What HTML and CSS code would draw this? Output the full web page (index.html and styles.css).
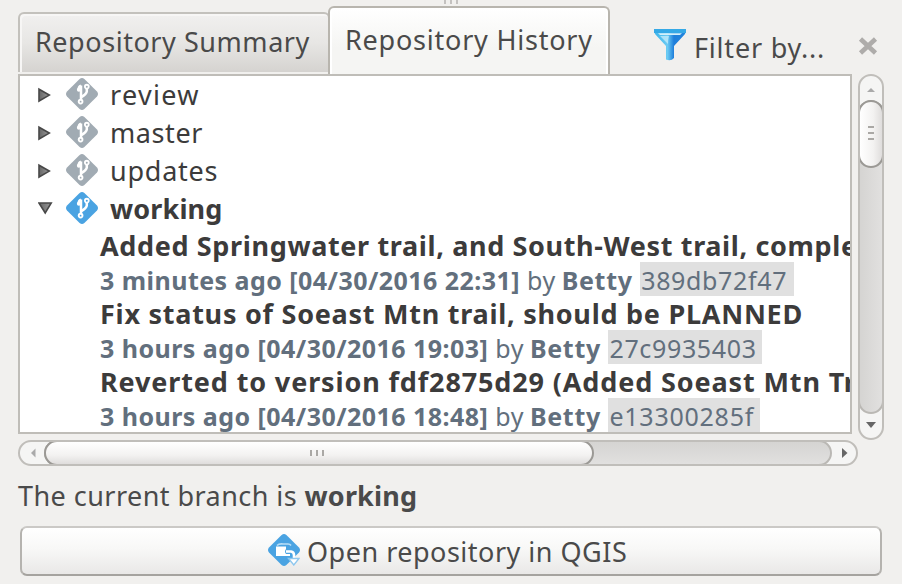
FILE: index.html
```
<!DOCTYPE html>
<html lang="en">
<head>
<meta charset="utf-8">
<title>Repository History</title>
<link rel="stylesheet" href="styles.css">
</head>
<body>
<svg class="defs" aria-hidden="true">
  <defs>
    <symbol id="branch" viewBox="0 0 32 32">
      <path fill="currentColor" d="M13.6 1Q16-1 18.4 1L31 13.6Q33 16 31 18.4L18.4 31Q16 33 13.6 31L1 18.4Q-1 16 1 13.6Z"/>
      <path d="M15 7.5V24M20.8 9V13.5Q20.5 16 15 19.5M15 7.8Q12.4 8.6 12.6 12.5" fill="none" stroke="#fff" stroke-width="2.5"/>
      <circle cx="12.9" cy="11.8" r="2" fill="#fff"/><circle cx="20.8" cy="8.6" r="2.8" fill="#fff"/><circle cx="14.6" cy="23.6" r="2.8" fill="#fff"/>
      <circle cx="20.8" cy="8.8" r="1" fill="currentColor"/><circle cx="14.6" cy="23.7" r=".9" fill="currentColor"/>
    </symbol>
    <linearGradient id="arrow"><stop offset="0" stop-color="#666"/><stop offset="1" stop-color="#999"/></linearGradient>
    <symbol id="closed" viewBox="0 0 14 16"><path d="M1 2.2V14L11.3 8.1Z" fill="url(#arrow)" stroke="#484848" stroke-width="1.6"/></symbol>
    <symbol id="open" viewBox="0 0 16 14"><path d="M1 2H13.2L7.2 12Z" fill="url(#arrow)" stroke="#484848" stroke-width="1.6"/></symbol>
    <linearGradient id="funnel"><stop offset=".1" stop-color="#45b9ec"/><stop offset=".42" stop-color="#6ccbf3"/><stop offset=".62" stop-color="#1f7fdb"/><stop offset="1" stop-color="#2485dc"/></linearGradient>
  </defs>
</svg>
<div class="panel">
  <div class="grip"><i></i><i></i><i></i></div>
  <div class="tabs">
    <div class="tab"><span class="t-sum">Repository Summary</span></div>
    <div class="tab active"><span class="t-his">Repository History</span></div>
    <div class="filter">
      <svg width="32" height="32" viewBox="0 0 32 32"><path d="M0 1.5H32L31 5 20 17V29Q17 32.5 12 30.5V17L1 5Z" fill="url(#funnel)"/><path d="M0 0H32V4H0Z" fill="#35a9e6"/><path d="M4 4.2H28L26 6H6Z" fill="#d3f0fb"/><path d="M6 7 14 15Q14 10 15 7Z" fill="#c8eefb" opacity=".75"/></svg>
      <span class="t-fil">Filter by...</span>
    </div>
    <svg class="close" width="20" height="20" viewBox="0 0 20 20"><path d="M2.5 3 17.5 17M17.5 3 2.5 17" stroke="#aeacaa" stroke-width="4.6"/></svg>
  </div>
  <div class="view">
    <div class="left">
      <div class="list">
        <div class="branch"><svg class="exp"><use href="#closed"/></svg><svg class="ico"><use href="#branch"/></svg><span class="t-rev">review</span></div>
        <div class="branch"><svg class="exp"><use href="#closed"/></svg><svg class="ico"><use href="#branch"/></svg><span class="t-mas">master</span></div>
        <div class="branch"><svg class="exp"><use href="#closed"/></svg><svg class="ico"><use href="#branch"/></svg><span class="t-upd">updates</span></div>
        <div class="branch current"><svg class="exp down"><use href="#open"/></svg><svg class="ico"><use href="#branch"/></svg><b class="t-wor">working</b></div>
        <div class="title t-c1">Added Springwater trail, and South-West trail, comple</div>
        <div class="meta"><b class="when t-w1">3 minutes ago [04/30/2016 22:31]</b><span class="by">by</span><b class="who">Betty</b><span class="hash">389db72f47</span></div>
        <div class="title t-c2">Fix status of Soeast Mtn trail, should be PLANNED</div>
        <div class="meta"><b class="when">3 hours ago [04/30/2016 19:03]</b><span class="by">by</span><b class="who">Betty</b><span class="hash">27c9935403</span></div>
        <div class="title t-c3">Reverted to version fdf2875d29 (Added Soeast Mtn Tr</div>
        <div class="meta"><b class="when">3 hours ago [04/30/2016 18:48]</b><span class="by">by</span><b class="who">Betty</b><span class="hash t-h3">e13300285f</span></div>
      </div>
      <div class="hbar">
        <svg width="840" height="26" viewBox="0 0 840 26"><path d="M17.5 8.5V17.5L13 13Z" fill="#aaa"/><path d="M824 8V18L829.5 13Z" fill="#666"/></svg>
        <div class="htrack"><div class="hthumb"><i></i><i></i><i></i></div></div>
      </div>
    </div>
    <div class="vbar">
      <svg width="26" height="366" viewBox="0 0 26 366"><path d="M9 18H17L13 14Z" fill="#aaa"/><path d="M8 348H18L13 354Z" fill="#666"/></svg>
      <div class="vtrack"><div class="vthumb"><i></i><i></i><i></i></div></div>
    </div>
  </div>
  <div class="status"><span class="t-cur">The current branch is</span><b class="t-wor">working</b></div>
  <div class="button">
    <svg width="32" height="32" viewBox="0 0 32 32"><path fill="#4aa3e2" d="M13.6 1Q16-1 18.4 1L31 13.6Q33 16 31 18.4L18.4 31Q16 33 13.6 31L1 18.4Q-1 16 1 13.6Z"/><path d="M9 11.5Q11 9.5 15 10H20Q22 10 23 11.5" fill="none" stroke="#b9def6" stroke-width="1.6"/><path d="M8 12.5H18V15Q16 17.5 18 20H22V22H8Z" fill="#fff"/><path d="M18 17.5H23Q26 18 26 21V26" fill="none" stroke="#fff" stroke-width="2.6"/><path d="M20.5 24.5H31L25.8 31Z" fill="#fff" stroke="#8ec7ee" stroke-width="1.4"/></svg>
    <span class="t-open">Open repository in QGIS</span>
  </div>
</div>
</body>
</html>
```
FILE: styles.css
```
* { box-sizing: border-box; }
body {
  margin: 0;
  background: #f1f0ee;
  color: #4a4a4a;
  font: 27px "Noto Sans", sans-serif;
  white-space: nowrap;
}
.defs { position: absolute; width: 0; height: 0; }
.panel { display: flex; flex-direction: column; width: 902px; height: 584px; padding: 0 18px; overflow: hidden; }
.grip { display: flex; gap: 4px; height: 6px; padding-left: 426px; }
.grip i { width: 2px; height: 4px; background: #c4c2c0; }
.tabs { display: flex; align-items: flex-end; height: 68px; flex: none; }
.tab {
  width: 312px; height: 60px; margin-bottom: 2px; padding-left: 15px; line-height: 56px;
  border: 2px solid #c3c1bc; border-bottom-width: 0; border-radius: 6px 6px 0 0;
  background: linear-gradient(#f1f0ef, #e7e6e4 50%, #d5d3d0);
  box-shadow: inset 2px 2px #f7f6f5;
}
.tab.active {
  width: 282px; height: 68px; margin: 0 0 0 -2px; padding-left: 15px; line-height: 64px;
  border-color: #b8b5ae; background: linear-gradient(#fff, #f5f5f3 60%);
  box-shadow: inset 2px 0 #fff, inset -2px 0 #fff;
}
.filter { display: flex; align-items: center; gap: 8px; height: 56px; margin-left: 44px; }
.filter svg { margin-top: -3px; }
.filter span { width: 164px; margin-top: 2px; }
.close { margin: 0 0 18px 0; flex: none; }
.view { display: flex; height: 392px; flex: none; }
.left { width: 840px; }
.list { width: 834px; height: 360px; border: 2px solid #bfbdb8; background: #fff; overflow: hidden; color: #3c3b3b; }
.branch { display: flex; align-items: center; height: 38px; padding-left: 18px; line-height: 38px; }
.exp { width: 14px; height: 16px; margin-right: 14px; margin-top: -1px; }
.exp.down { width: 16px; height: 14px; margin-right: 12px; margin-top: -2px; }
.ico { width: 32px; height: 32px; margin-right: 12px; margin-top: -2px; color: #a1abb3; }
.current .ico { color: #4aa3e2; }
.title { height: 34px; padding-left: 80px; line-height: 35px; font-weight: bold; }
.meta { display: flex; height: 34px; padding-left: 80px; line-height: 36px; font-size: 25px; color: #626f7d; }
.when { letter-spacing: .46px; }
.by { margin-left: 7px; letter-spacing: .5px; }
.who { margin-left: 6px; letter-spacing: .7px; }
.hash { width: 154px; margin-left: 7.5px; padding-left: 1px; background: #e0e0e0; letter-spacing: .65px; }
.t-h3 { width: 152px; letter-spacing: .75px; }
.t-sum { letter-spacing: .55px; }
.t-his { letter-spacing: .78px; }
.t-fil { letter-spacing: .8px; }
.t-rev { letter-spacing: 1.3px; }
.t-mas { letter-spacing: .6px; }
.t-upd { letter-spacing: .75px; }
.t-wor { letter-spacing: .15px; }
.t-c1 { letter-spacing: .64px; }
.t-c2 { letter-spacing: .74px; }
.t-c3 { letter-spacing: .87px; }
.t-cur { letter-spacing: .45px; }
.t-open { letter-spacing: .5px; }
.hbar, .vbar { display: grid; border: 2px solid #c0beba; border-radius: 13px; background: #f5f5f4; overflow: hidden; }
.hbar { width: 840px; height: 26px; margin-top: 6px; }
.vbar { width: 26px; height: 366px; }
.hbar svg, .vbar svg { grid-area: 1 / 1; margin: -2px; }
.htrack, .vtrack { grid-area: 1 / 1; z-index: 1; border-radius: 13px; }
.htrack { width: 788px; height: 26px; margin: -2px 0 0 24px; border: 2px solid #bab8b4; background: linear-gradient(#d5d4d2, #e1e0df); }
.vtrack { width: 26px; height: 314px; margin: 24px 0 0 -2px; border: 2px solid #bab8b4; background: linear-gradient(90deg, #d5d4d2, #e1e0df); }
.hthumb, .vthumb { display: flex; align-items: center; justify-content: center; gap: 4px; border: 2px solid #9b9995; border-radius: 13px; margin: -2px; }
.hthumb { width: 550px; height: 26px; padding-right: 4px; background: linear-gradient(#fff, #f3f2f1 60%, #dfdddc); }
.vthumb { width: 26px; height: 68px; padding-bottom: 2px; flex-direction: column; background: linear-gradient(90deg, #fff, #f3f2f1 60%, #dfdddc); }
.hthumb i { width: 2px; height: 6px; background: #aaa8a5; }
.vthumb i { width: 6px; height: 2px; background: #aaa8a5; }
.status { display: flex; gap: 7.5px; height: 60px; flex: none; line-height: 60px; }
.button {
  display: flex; align-items: center; gap: 7px; width: 862px; height: 50px; margin-left: 2px;
  padding: 0 0 0 246px; border: 2px solid #b5b3af; border-top-color: #cbc9c6; border-bottom-color: #a5a39f; border-radius: 7px;
  background: linear-gradient(#fff, #f8f8f7 45%, #e9e8e7); flex: none;
}
.button svg { margin-top: -2px; }
```
